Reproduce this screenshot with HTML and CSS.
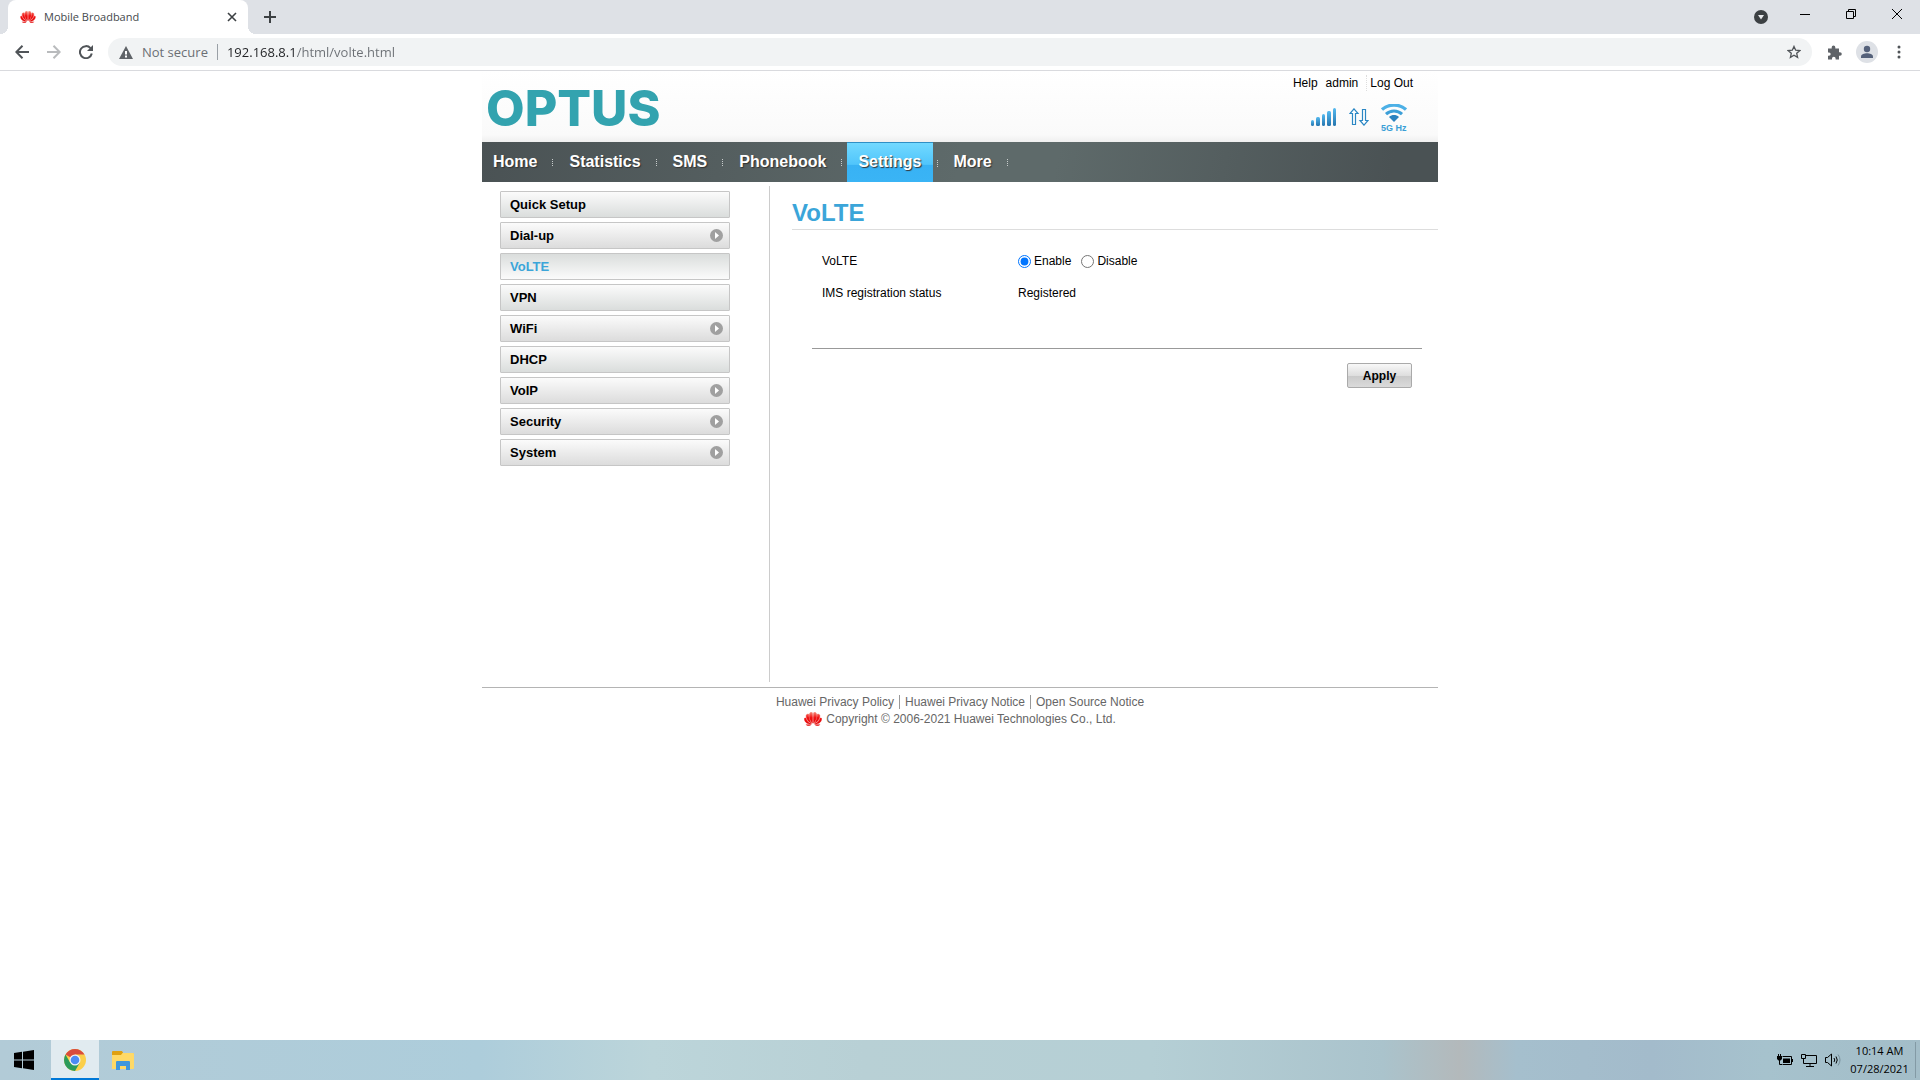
FILE: index.html
```html
<!DOCTYPE html>
<html lang="en">
<head>
<meta charset="utf-8">
<title>Mobile Broadband</title>
<link rel="stylesheet" href="styles.css">
</head>
<body>
<svg class="defs" width="0" height="0" aria-hidden="true">
  <defs>
    <linearGradient id="blue" x1="0" y1="0" x2="0" y2="1"><stop offset="0" stop-color="#55baf0"/><stop offset="1" stop-color="#2575ae"/></linearGradient>
    <linearGradient id="red" gradientUnits="userSpaceOnUse" x1="0" y1="0" x2="0" y2="14"><stop offset="0" stop-color="#f58a78"/><stop offset="0.4" stop-color="#f01212"/><stop offset="1" stop-color="#e00000"/></linearGradient>
    <symbol id="flower" viewBox="0 0 18 14">
      <g fill="url(#red)" stroke="url(#red)" stroke-width="0.400">
        <path d="M8.400 11.200C5 7.500 4.600 3.500 6 .8 7 .2 8 .2 8.400.8 8.700 4 8.700 8 8.400 11.200z"/>
        <path d="M9.600 11.200C13 7.500 13.400 3.500 12 .8 11 .2 10 .2 9.600.8 9.300 4 9.300 8 9.600 11.200z"/>
        <path d="M7.700 11.400C3.500 9.500 1.800 6 2.200 3 3.100 2 4.200 1.800 4.700 2.300 4.600 6 5.800 9 7.700 11.400z"/>
        <path d="M10.300 11.400C14.500 9.500 16.200 6 15.800 3 14.900 2 13.800 1.800 13.300 2.300 13.400 6 12.200 9 10.300 11.400z"/>
        <path d="M7.300 12C3.300 12.300.3 10 .3 6.500.9 5.900 1.500 5.900 1.900 6.200 2.800 9 4.800 10.800 7.300 12z"/>
        <path d="M10.700 12C14.700 12.300 17.700 10 17.700 6.500 17.100 5.900 16.500 5.900 16.100 6.200 15.200 9 13.200 10.800 10.700 12z"/>
      </g>
      <path fill="#e00000" d="M7.500 12.400H1.600C3 14 5.500 14.500 7.500 12.400zM10.500 12.400H16.400C15 14 12.500 14.500 10.500 12.400z"/>
    </symbol>
    <symbol id="arrow" viewBox="0 0 13 13"><circle cx="6.500" cy="6.500" r="6.500" fill="#a0a0a0"/><path d="M5 3v7l4-3.500z" fill="#fff"/></symbol>
  </defs>
</svg>

<header class="browser">
  <div class="tabstrip">
    <div class="tab">
      <svg class="favicon" width="16" height="12"><use href="#flower"/></svg>
      <span class="tab-title">Mobile Broadband</span>
      <button class="icon-btn" aria-label="Close tab"><svg width="10" height="10" viewBox="0 0 10 10"><path d="M1 1l8 8M9 1L1 9" stroke="#3c4043" stroke-width="1.600"/></svg></button>
    </div>
    <button class="icon-btn new-tab" aria-label="New tab"><svg width="12" height="12" viewBox="0 0 12 12"><path d="M6 0v12M0 6h12" stroke="#3c4043" stroke-width="2"/></svg></button>
    <div class="window-controls">
      <button class="icon-btn search-tabs" aria-label="Search tabs"><svg width="14" height="14" viewBox="0 0 14 14"><circle cx="7" cy="7" r="7" fill="#3c4043"/><path d="M4 5h6l-3 4.500z" fill="#e8eaed"/></svg></button>
      <button class="icon-btn" aria-label="Minimise"><svg width="10" height="10" viewBox="0 0 10 10"><path d="M0 5.500h10" stroke="#000"/></svg></button>
      <button class="icon-btn" aria-label="Restore"><svg width="10" height="10" viewBox="0 0 10 10" fill="none" stroke="#000"><path d="M.5 2.500h7v7h-7zM2.500 2.500v-2h7v7h-2"/></svg></button>
      <button class="icon-btn" aria-label="Close"><svg width="10" height="10" viewBox="0 0 10 10"><path d="M0 0l10 10M10 0L0 10" stroke="#000"/></svg></button>
    </div>
  </div>
  <div class="toolbar">
    <button class="icon-btn" aria-label="Back"><svg width="14" height="14" viewBox="0 0 14 14" fill="none" stroke="#505458" stroke-width="2"><path d="M14 7H1.500M7.500.7L1.300 7l6.200 6.300"/></svg></button>
    <button class="icon-btn" aria-label="Forward"><svg width="14" height="14" viewBox="0 0 14 14" fill="none" stroke="#b9bbbd" stroke-width="2"><path d="M0 7h12.500M6.500.7L12.700 7l-6.200 6.300"/></svg></button>
    <button class="icon-btn" aria-label="Reload"><svg width="14" height="14" viewBox="0 0 14 14"><path d="M11.500 3.200A6 6 0 1 0 12.800 8.500" fill="none" stroke="#505458" stroke-width="2"/><path d="M14 0v6H8z" fill="#505458"/></svg></button>
    <div class="omnibox">
      <svg width="14" height="13" viewBox="0 0 14 13"><path d="M7 0l7 13H0z" fill="#5f6368"/><path d="M6 5h2v3.500H6zM6 9.500h2v2H6z" fill="#fff"/></svg>
      <label class="secure" for="url">Not secure</label>
      <input id="url" class="url" type="text" value="192.168.8.1/html/volte.html">
      <button class="icon-btn" aria-label="Bookmark"><svg width="14" height="14" viewBox="0 0 14 14"><path d="M7 1.400l1.700 3.800 4.100.4-3.100 2.700.9 4.100L7 10.300l-3.600 2.100.9-4.100L1.200 5.600l4.100-.4z" fill="none" stroke="#505458" stroke-width="1.300"/></svg></button>
    </div>
    <div class="tools">
      <button class="icon-btn" aria-label="Extensions"><svg width="15" height="15" viewBox="0 0 15 15"><path d="M1 3.500h3.700V2.200a1.800 1.800 0 0 1 3.600 0v1.300H12v3.700h1a1.800 1.800 0 0 1 0 3.600h-1V14.500H8.600v-1a1.800 1.800 0 0 0-3.600 0v1H1v-3.700h1a1.700 1.700 0 0 0 0-3.400H1z" fill="#5f6368"/></svg></button>
      <button class="icon-btn" aria-label="Profile"><svg width="22" height="22" viewBox="0 0 22 22"><circle cx="11" cy="11" r="11" fill="#dee1e6"/><circle cx="11" cy="8" r="3.200" fill="#55617a"/><path d="M5 17v-1.500c0-2.300 3.500-3.300 6-3.300s6 1 6 3.300V17z" fill="#55617a"/></svg></button>
      <button class="icon-btn" aria-label="Menu"><svg width="14" height="14" viewBox="0 0 14 14" fill="#505458"><circle cx="7" cy="2" r="1.500"/><circle cx="7" cy="7" r="1.500"/><circle cx="7" cy="12" r="1.500"/></svg></button>
    </div>
  </div>
</header>

<main class="viewport">
  <div class="page">
    <div class="banner">
      <div class="logo">OPTUS</div>
      <div class="account">
        <div class="links"><a href="#">Help</a><a href="#">admin</a><a class="logout" href="#">Log Out</a></div>
        <div class="status">
          <svg width="26" height="18" viewBox="0 0 26 18" fill="url(#blue)"><rect x="0" y="12" width="3" height="6" rx="1.500"/><rect x="5" y="9" width="4" height="9" rx="1.500"/><rect x="11" y="6" width="3" height="12" rx="1.500"/><rect x="16" y="3" width="4" height="15" rx="1.500"/><rect x="22" y="0" width="3" height="18" rx="1.500"/></svg>
          <svg width="20" height="18" viewBox="0 0 20 18" fill="#fff" stroke="#2b87c4" stroke-width="1.200"><path d="M5 .8l4 4.700H6.500V16.500h-3V5.500H1z"/><path d="M15 17.200l4-4.700H16.500V1.500h-3v11H11z"/></svg>
          <div class="wifi">
            <svg width="26" height="18" viewBox="0 0 26 18"><path d="M1 5.600C7.500-.5 18.500-.5 25 5.600" fill="none" stroke="#4cb0e6" stroke-width="3.200"/><path d="M5 10.200c4.500-4.300 11.500-4.300 16 0" fill="none" stroke="#3c9fd8" stroke-width="3"/><path d="M8 13c3-2.600 7-2.600 10 0l-5 5z" fill="#2b82bf"/></svg>
            <span>5G Hz</span>
          </div>
        </div>
      </div>
    </div>

    <nav class="menu">
      <a href="#">Home</a><a href="#">Statistics</a><a href="#">SMS</a><a href="#">Phonebook</a><a class="active" href="#">Settings</a><a href="#">More</a>
    </nav>

    <div class="content">
      <nav class="sidebar">
        <a class="plain" href="#">Quick Setup</a>
        <a href="#">Dial-up<svg width="13" height="13"><use href="#arrow"/></svg></a>
        <a class="current" href="#">VoLTE</a>
        <a class="plain" href="#">VPN</a>
        <a href="#">WiFi<svg width="13" height="13"><use href="#arrow"/></svg></a>
        <a class="plain" href="#">DHCP</a>
        <a href="#">VoIP<svg width="13" height="13"><use href="#arrow"/></svg></a>
        <a href="#">Security<svg width="13" height="13"><use href="#arrow"/></svg></a>
        <a href="#">System<svg width="13" height="13"><use href="#arrow"/></svg></a>
      </nav>
      <section class="panel">
        <h1>VoLTE</h1>
        <form class="form">
          <div class="row" role="radiogroup" aria-labelledby="volte-label">
            <span class="name" id="volte-label">VoLTE</span>
            <input type="radio" name="volte" id="on" checked><label for="on">Enable</label>
            <input type="radio" name="volte" id="off"><label for="off">Disable</label>
          </div>
          <div class="row"><span class="name">IMS registration status</span><span>Registered</span></div>
          <div class="actions"><button class="apply" type="button">Apply</button></div>
        </form>
      </section>
    </div>

    <footer class="footer">
      <div class="legal"><a href="#">Huawei Privacy Policy</a><a href="#">Huawei Privacy Notice</a><a href="#">Open Source Notice</a></div>
      <div class="copyright"><svg width="18" height="14"><use href="#flower"/></svg>Copyright © 2006-2021 Huawei Technologies Co., Ltd.</div>
    </footer>
  </div>
</main>

<div class="taskbar">
  <button class="task start" aria-label="Start"><svg width="20" height="20" viewBox="0 0 20 20"><path d="M0 3l8-1.200v7.700H0zM9 1.700L20 0v9.500H9zM0 10.500h8v7.700L0 17zM9 10.500h11V20L9 18.300z"/></svg></button>
  <button class="task running" aria-label="Google Chrome"><svg width="22" height="22" viewBox="0 0 22 22"><circle cx="11" cy="11" r="11" fill="#fbcf4a"/><path d="M11 11L1.500 5.500A11 11 0 0 1 20.500 5.500H11z" fill="#d94c3d"/><path d="M1.500 5.500A11 11 0 0 0 11 22l4.800-8.200L11 11 6.200 13.700z" fill="#2b9b5b"/><circle cx="11" cy="11" r="5.500" fill="#f1f4f5"/><circle cx="11" cy="11" r="4.300" fill="#4c8bf5"/></svg></button>
  <button class="task" aria-label="File Explorer"><svg width="22" height="19" viewBox="0 0 22 19"><path d="M0 1q0-1 1-1h9l1.500 2.500H21q1 0 1 1V7H0z" fill="#e0a010"/><path d="M0 4h9l1.500-2H21q1 0 1 1v14q0 1-1 1H0z" fill="#ffd966"/><path d="M4 19v-8q0-1 1-1h12q1 0 1 1v8h-4v-4H8v4z" fill="#3f97dc"/></svg></button>
  <div class="tray">
    <svg width="16" height="12" viewBox="0 0 16 12"><path d="M5.500 2.500h9v8h-9" fill="none" stroke="#000"/><path d="M6 4.500h7v4.500H6zM15 5h1v3h-1zM0 2h5v3L3.500 6.500h-2L0 5zM1 0h1v2H1zM3 0h1v2H3z"/><path d="M2.500 6v4.500H5" fill="none" stroke="#000"/></svg>
    <svg width="16" height="13" viewBox="0 0 16 13" fill="none" stroke="#000"><path d="M5 1.500h10.500v8H2.500V5M9 10v2.500M5 12.500h8M.5.5h4v4h-4z"/></svg>
    <svg width="16" height="14" viewBox="0 0 16 14" fill="none" stroke="#000"><path d="M.5 4.500h2L6.500 1v12L2.500 9.500h-2zM9 5q1.500 2 0 4M11 3.500q2.500 3.500 0 7"/><path d="M13 1.500q4 5.500 0 11" stroke="#78909c"/></svg>
    <time class="clock">10:14 AM<br>07/28/2021</time>
  </div>
</div>
</body>
</html>
```
FILE: styles.css
```css
* { box-sizing: border-box; }
body {
  margin: 0;
  min-height: 100vh;
  display: flex;
  flex-direction: column;
  background: #fff;
  color: #000;
  font: 12px/16px "Liberation Sans", Arial, sans-serif;
}
a { color: inherit; text-decoration: none; }
svg { display: block; flex: none; }
.defs { position: absolute; }
.icon-btn { display: flex; padding: 0; border: 0; background: none; }

/* Browser frame */
.browser { font-family: "Open Sans", sans-serif; border-bottom: 1px solid #d9dade; }
.tabstrip { display: flex; align-items: center; height: 34px; padding-left: 8px; background: #dee1e6; }
.tab {
  position: relative;
  display: flex;
  align-items: center;
  gap: 8px;
  width: 240px;
  height: 34px;
  padding: 0 11px 0 12px;
  border-radius: 8px 8px 0 0;
  background: #fff;
}
.tab::before, .tab::after { content: ""; position: absolute; bottom: 0; width: 8px; height: 8px; }
.tab::before { left: -8px; background: radial-gradient(circle at 0 0, #dee1e6 8px, #fff 8px); }
.tab::after { right: -8px; background: radial-gradient(circle at 100% 0, #dee1e6 8px, #fff 8px); }
.tab-title { flex: 1; font-size: 11px; color: #45494d; }
.new-tab { margin-left: 16px; }
.window-controls { display: flex; align-items: center; gap: 36px; margin-left: auto; padding: 0 18px 6px 0; }
.search-tabs { margin: 6px -4px 0 0; }
.toolbar { display: flex; align-items: center; gap: 18px; height: 36px; padding: 0 14px 0 15px; }
.omnibox {
  flex: 1;
  display: flex;
  align-items: center;
  height: 28px;
  margin-left: -3px;
  padding: 0 11px;
  border-radius: 14px;
  background: #f1f3f4;
  font-size: 13px;
}
.secure { margin-left: 9px; padding-right: 9px; border-right: 1px solid #9aa0a6; color: #6b6f74; }
.url {
  flex: 1;
  min-width: 0;
  margin-left: 9px;
  padding: 0;
  border: 0;
  outline: 0;
  font: inherit;
  color: transparent;
  background: linear-gradient(90deg, #202124 70px, #6b6f74 70px);
  -webkit-background-clip: text;
  background-clip: text;
}
.tools { display: flex; align-items: center; gap: 14px; margin-left: -3px; }

/* Router page */
.viewport { flex: 1; }
.page { max-width: 956px; margin: 0 auto; }
.banner {
  display: flex;
  justify-content: space-between;
  height: 71px;
  background: linear-gradient(#fff, #fafafa 90%, #efefef);
}
.logo {
  padding: 12px 0 0 4px;
  font: 800 50px/50px Inter, sans-serif;
  color: #33a3af;
}
.account { padding: 4px 25px 0 0; }
.links { display: flex; justify-content: flex-end; gap: 8px; }
.logout { padding-left: 3px; border-left: 1px dotted #ddd; }
.status { display: flex; align-items: flex-start; gap: 12px; justify-content: flex-end; padding: 13px 6px 0 0; }
.status > svg { margin-top: 4px; }
.wifi { width: 26px; font: bold 9px/12px "Liberation Sans", Arial, sans-serif; color: #3a9fd6; white-space: nowrap; }
.menu {
  display: flex;
  height: 40px;
  background: linear-gradient(100deg, #4a5254, #5e6a6a 50%, #5e6a6a 60%, #4a5254 95%);
}
.menu a {
  position: relative;
  margin-right: 10px;
  padding: 0 11px;
  font-size: 16px;
  font-weight: bold;
  line-height: 40px;
  color: #fff;
  text-shadow: 1px 1px 1px #333;
}
.menu a::after { content: ""; position: absolute; right: -5px; top: 17px; height: 7px; border-right: 1px dotted #c8cccc; }
.menu .active {
  border-top: 1px solid #2f8fc5;
  line-height: 38px;
  background: linear-gradient(#72d9ff, #50c5fb 55%, #38b2f4 56%, #3ab4f5);
}

.content { display: flex; padding: 4px 0 5px; }
.sidebar { display: flex; flex-direction: column; gap: 4px; width: 288px; padding: 5px 39px 0 18px; border-right: 1px solid #ccc; min-height: 496px; }
.sidebar a {
  display: flex;
  align-items: center;
  justify-content: space-between;
  height: 27px;
  padding: 0 6px 0 9px;
  border: 1px solid #c6c6c6;
  border-radius: 1px;
  background: linear-gradient(#fbfbfb, #dcdcdc);
  font-size: 13px;
  font-weight: bold;
}
.sidebar .plain { background: linear-gradient(#fbfbfb, #dadddc); }
.sidebar .current { background: linear-gradient(#dadddc, #fbfbfb); color: #3ba5d9; }
.panel { flex: 1; padding: 13px 0 0 22px; }
h1 { margin: 0; padding-bottom: 2px; border-bottom: 1px solid #ddd; font-size: 24px; line-height: 28px; color: #3ba5d9; }
.form { margin: 0 16px 0 20px; }
.row { display: flex; align-items: center; height: 32px; padding-left: 10px; }
.row:first-child { margin-top: 15px; }
.name { width: 196px; }
.row input { width: 13px; height: 13px; margin: 0 3px 0 0; }
.row label { margin-right: 10px; }
.actions { display: flex; justify-content: flex-end; margin-top: 39px; padding: 14px 10px 0; border-top: 1px solid #999; }
.apply {
  width: 65px;
  height: 25px;
  padding: 0;
  border: 1px solid #aaa;
  border-radius: 2px;
  background: linear-gradient(#f8f8f8, #dedede 50%, #cacaca 52%, #dadada);
  font: bold 12px/20px "Liberation Sans", Arial, sans-serif;
  color: #000;
}
.footer { padding-top: 5px; border-top: 1px solid #b4b4b4; color: #666; }
.legal, .copyright { display: flex; justify-content: center; align-items: center; }
.legal { height: 17px; }
.legal a { padding: 0 5px; line-height: 14px; }
.legal a + a { border-left: 1px solid #999; }
.copyright { gap: 4px; height: 17px; }

/* Taskbar */
.taskbar {
  display: flex;
  height: 40px;
  background: linear-gradient(90deg, #b2cbd7, #adcddb 25%, #bcd5da 34%, #b8d0d5 45%, #b5cfd5 60%, #aac3cc 72%, #b3b9bb 76%, #a5bfcd 79%, #a3bbcb 86%, #a6c2cd 92%, #a3bdc8);
  font-family: "Open Sans", sans-serif;
}
.task { display: flex; align-items: center; justify-content: center; width: 48px; padding: 0; border: 0; background: none; }
.start { width: 51px; padding-right: 3px; }
.running { border-bottom: 2px solid #0078d7; padding-top: 2px; background: #e1ebf0; }
.tray { display: flex; align-items: center; gap: 8px; margin-left: auto; padding-right: 4px; }
.clock { width: 67px; padding-right: 5px; border-right: 1px solid #839aa5; font-size: 11px; line-height: 18px; text-align: center; }
```
